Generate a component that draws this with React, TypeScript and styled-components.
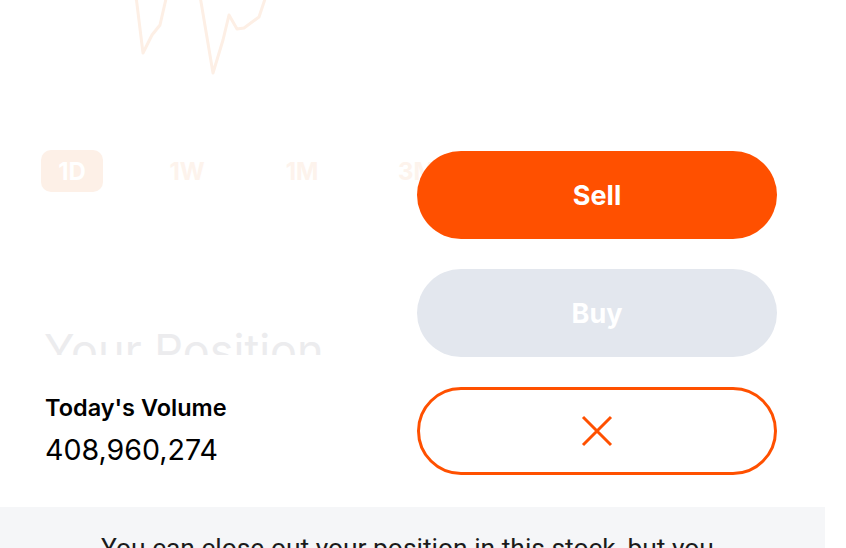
import React from "react";
import styled, { createGlobalStyle } from "styled-components";

const GlobalStyle = createGlobalStyle`
  html, body {
    margin: 0;
    padding: 0;
    background: #ffffff;
    overflow: hidden;
  }
  * {
    box-sizing: border-box;
  }
`;

const ranges = ["1D", "1W", "1M", "3M"];

const App: React.FC = () => {
  return (
    <>
      <GlobalStyle />
      <Page>
        <Content>
          <FadedTop>
            <Chart>
              <svg width="420" height="150" viewBox="0 0 420 150">
                <polyline
                  points="134,-20 143,53 152,35 160,25 168,-10"
                  fill="none"
                  stroke="#fdefe5"
                  strokeWidth="3"
                  strokeLinejoin="round"
                />
                <polyline
                  points="199,-10 213,73 223,40 229,15 237,29 244,28 259,17 268,-10"
                  fill="none"
                  stroke="#fdefe5"
                  strokeWidth="3"
                  strokeLinejoin="round"
                />
              </svg>
            </Chart>
            <TabRow>
              {ranges.map((r) => (
                <RangeTab key={r} $active={r === "1D"}>
                  {r}
                </RangeTab>
              ))}
            </TabRow>
            <PositionTitle>Your Position</PositionTitle>
          </FadedTop>

          <Stats>
            <StatLabel>Today's Volume</StatLabel>
            <StatValue>408,960,274</StatValue>
          </Stats>

          <Notice>
            <NoticeText>
              You can close out your position in this stock, but you
            </NoticeText>
          </Notice>
        </Content>

        <ActionSheet>
          <PillButton $variant="primary">Sell</PillButton>
          <PillButton $variant="muted">Buy</PillButton>
          <PillButton $variant="outline" aria-label="Close">
            <svg width="32" height="32" viewBox="0 0 32 32">
              <path
                d="M2 2 L30 30 M30 2 L2 30"
                stroke="#ff5000"
                strokeWidth="3"
                fill="none"
              />
            </svg>
          </PillButton>
        </ActionSheet>
      </Page>
    </>
  );
};

export default App;

const Page = styled.div`
  position: relative;
  width: 846px;
  height: 548px;
  overflow: hidden;
  font-family: Inter, "Liberation Sans", sans-serif;
`;

const Content = styled.div`
  width: 825px;
  display: flex;
  flex-direction: column;
`;

const FadedTop = styled.div`
  height: 355px;
  overflow: hidden;
`;

const Chart = styled.div`
  height: 150px;
  svg {
    display: block;
  }
`;

const TabRow = styled.div`
  display: flex;
  gap: 53px;
  padding-left: 41px;
`;

const RangeTab = styled.div<{ $active: boolean }>`
  width: 62px;
  height: 42px;
  border-radius: 10px;
  display: flex;
  align-items: center;
  justify-content: center;
  font-size: 24px;
  font-weight: 700;
  color: ${(p) => (p.$active ? "#ffffff" : "#fdf3ec")};
  background: ${(p) => (p.$active ? "#fdf0e7" : "transparent")};
`;

const PositionTitle = styled.h2`
  margin: 132px 0 0 44px;
  font-size: 45px;
  font-weight: 400;
  line-height: 54px;
  color: #ececee;
`;

const Stats = styled.div`
  padding: 37px 45px 0;
  height: 152px;
`;

const StatLabel = styled.div`
  font-size: 23.5px;
  font-weight: 600;
  color: #000000;
  line-height: 32px;
`;

const StatValue = styled.div`
  margin-top: 9px;
  font-size: 28.6px;
  font-weight: 400;
  color: #000000;
  line-height: 34px;
`;

const Notice = styled.div`
  background: #f5f6f8;
  padding: 24px 0 0 101px;
  height: 60px;
`;

const NoticeText = styled.p`
  margin: 0;
  font-family: Roboto, "Liberation Sans", sans-serif;
  font-size: 26.4px;
  color: #1b1b1b;
  line-height: 34px;
  white-space: nowrap;
`;

const ActionSheet = styled.div`
  position: absolute;
  left: 417px;
  top: 151px;
  width: 360px;
  display: flex;
  flex-direction: column;
  gap: 30px;
`;

const PillButton = styled.button<{ $variant: "primary" | "muted" | "outline" }>`
  height: 88px;
  border-radius: 44px;
  display: flex;
  align-items: center;
  justify-content: center;
  font-family: Inter, "Liberation Sans", sans-serif;
  font-size: 27px;
  font-weight: 700;
  color: #ffffff;
  cursor: pointer;
  border: ${(p) => (p.$variant === "outline" ? "3px solid #ff5000" : "none")};
  background: ${(p) =>
    p.$variant === "primary"
      ? "#ff5000"
      : p.$variant === "muted"
      ? "#e3e7ee"
      : "#ffffff"};
`;
